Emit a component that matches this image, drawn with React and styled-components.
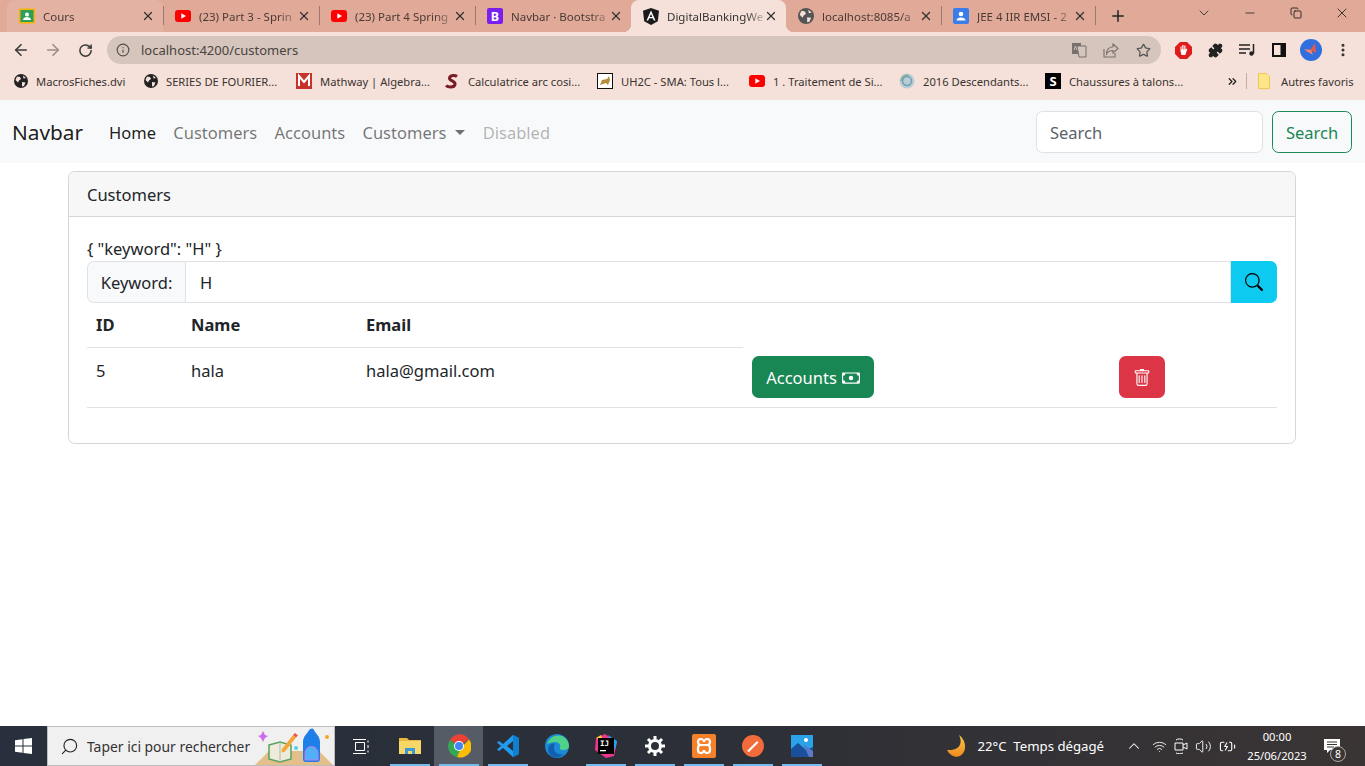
import React from "react";
import styled, { createGlobalStyle } from "styled-components";
import { BsSearch, BsCash, BsTrash } from "react-icons/bs";
import { ArrowLeft, ArrowRight, RotateCw, Info, Star, Plus, X, ChevronDown, Minus, Copy, Search, Puzzle, ChevronUp, Volume2, Wifi, BatteryCharging, EllipsisVertical, ChevronsRight } from "lucide-react";

const Global = createGlobalStyle`
  html, body { margin: 0; padding: 0; background: #fff; }
  body { font-family: "Noto Sans", "Open Sans", sans-serif; color: #212529; overflow: hidden; }
  * { box-sizing: border-box; }
`;

const Shell = styled.div`display:flex;flex-direction:column;height:766px;width:1365px;`;

/* ---------- browser chrome ---------- */
const TabStrip = styled.div`display:flex;align-items:stretch;height:32px;background:#e0a998;padding-left:7px;`;
const Tab = styled.div`
  position:relative;width:${p=>p.$w||156}px;display:flex;align-items:center;gap:8px;flex:none;
  padding:0 8px 0 12px;font-size:11.5px;color:${p=>p.$active?"#333":"#4a3a36"};
  border-radius:${p=>p.$active||p.$hover?"8px 8px 0 0":"0"};
  background:${p=>p.$active?"#f5e1da":p.$hover?"#e4b2a2":"transparent"};
  ${p=>p.$sep?`&::after{content:"";position:absolute;right:-1px;top:6px;height:19px;width:1px;background:#9a7a70;}`:""}
  ${p=>p.$active?`
    &::before,&::after{content:"";position:absolute;bottom:0;width:8px;height:8px;}
    &::before{left:-8px;background:radial-gradient(circle at 0 0,transparent 8px,#f5e1da 8.5px);}
    &::after{right:-8px;background:radial-gradient(circle at 100% 0,transparent 8px,#f5e1da 8.5px);}
  `:""}
`;
const TabTitle = styled.span`
  flex:1;min-width:0;margin-right:-7px;overflow:hidden;white-space:nowrap;
  -webkit-mask-image:linear-gradient(90deg,#000 82%,rgba(0,0,0,.25));mask-image:linear-gradient(90deg,#000 82%,rgba(0,0,0,.25));
`;
const NewTab = styled.div`width:46px;display:flex;align-items:center;justify-content:center;color:#222;`;
const WinControls = styled.div`margin-left:auto;display:flex;align-items:flex-start;`;
const WinBtn = styled.div`width:46px;height:26px;display:flex;align-items:center;justify-content:center;color:#222;`;

const Toolbar = styled.div`height:36px;background:#f5e1da;display:flex;align-items:flex-start;padding:4px 5px 0 5px;`;
const ToolBtn = styled.div`width:32px;height:28px;display:flex;align-items:center;justify-content:center;color:${p=>p.$muted?"#9a8d88":"#3a3a3a"};flex:none;`;
const Omnibox = styled.div`
  width:1054px;height:28px;margin:0 6px;border-radius:14px;background:#d5c5bc;flex:none;
  display:flex;align-items:center;padding:0 2px 0 9px;font-size:13px;color:#4a4340;
`;
const Url = styled.span`flex:1;margin-left:11px;`;

const Bookmarks = styled.div`
  height:32px;background:#f5e1da;display:flex;align-items:center;padding:0 10px 6px 14px;
  font-size:11.2px;color:#3a3230;white-space:nowrap;
`;
const Bookmark = styled.div`width:${p=>p.$w}px;display:flex;align-items:center;gap:${p=>p.$gap||8}px;flex:none;`;
const BmSep = styled.div`width:1px;height:16px;background:#c4aca4;margin:0 11px 0 7px;`;

/* ---------- navbar ---------- */
const Navbar = styled.nav`height:63px;background:#f8f9fa;display:flex;align-items:center;padding:0 13px 0 12px;`;
const Brand = styled.a`font-size:20.8px;color:rgba(0,0,0,.9);margin-right:26px;`;
const NavList = styled.div`display:flex;gap:17.3px;align-items:center;padding-top:1px;`;
const NavLink = styled.a`
  font-size:16.5px;
  color:${p=>p.$active?"rgba(0,0,0,.9)":p.$disabled?"rgba(0,0,0,.3)":"rgba(0,0,0,.55)"};
  display:inline-flex;align-items:center;
`;
const Caret = styled.span`
  display:inline-block;margin-left:9px;border-top:5px solid rgba(0,0,0,.55);
  border-left:5px solid transparent;border-right:5px solid transparent;
`;
const SearchForm = styled.form`margin-left:auto;display:flex;gap:9px;`;
const SearchInput = styled.div`
  width:227px;height:42px;border:1px solid #dee2e6;border-radius:6.6px;background:#fff;
  display:flex;align-items:center;padding:1px 13px 0;font-size:16.5px;color:#5c636a;
`;
const OutlineBtn = styled.button`
  width:80px;height:42px;border:1px solid #198754;border-radius:6.6px;background:transparent;
  font:inherit;font-size:16.5px;color:#198754;padding:1px 0 0;
`;

/* ---------- page ---------- */
const Page = styled.main`flex:1;padding:8px 1px 0 0;`;
const Card = styled.section`width:1228px;height:273px;margin:0 auto;border:1px solid #d4d6d9;border-radius:6.6px;overflow:hidden;`;
const CardHeader = styled.header`
  height:45px;background:#f7f7f7;border-bottom:1px solid #d4d6d9;display:flex;align-items:center;padding:0 18px;font-size:16.5px;
`;
const CardBody = styled.div`padding:18px 18px 0;font-size:16.5px;`;
const Json = styled.div`height:26px;padding-top:1px;line-height:26px;white-space:pre;`;
const InputGroup = styled.div`display:flex;height:42px;`;
const Addon = styled.div`
  width:99px;background:#f8f9fa;border:1px solid #dee2e6;border-radius:6.6px 0 0 6.6px;
  display:flex;align-items:center;justify-content:center;
`;
const KeywordInput = styled.div`
  flex:1;border:1px solid #dee2e6;border-left:0;display:flex;align-items:center;padding-left:14px;
`;
const InfoBtn = styled.button`
  width:46px;background:#0dcaf0;border:0;border-radius:0 6.6px 6.6px 0;color:#000;padding:0;
  display:flex;align-items:center;justify-content:center;
`;
const Table = styled.table`width:100%;border-collapse:collapse;table-layout:fixed;`;
const Th = styled.th`
  height:44px;text-align:left;padding:0 9px;font-weight:700;font-size:16.5px;border-bottom:1px solid #dee2e6;
`;
const Td = styled.td`
  height:60px;padding:10px 9px 9px;vertical-align:top;line-height:26px;
  &:nth-child(n+4){padding:9px 9px 8px;}
`;
const Row = styled.tr`border-bottom:1px solid #dee2e6;`;
const Btn = styled.button`
  height:42px;border:0;border-radius:6.6px;color:#fff;font:inherit;font-size:16.5px;
  background:${p=>p.$bg};width:${p=>p.$w}px;display:flex;align-items:center;justify-content:center;gap:5px;padding:1px 0 0;
`;

/* ---------- taskbar ---------- */
const Taskbar = styled.footer`
  height:40px;display:flex;align-items:stretch;color:#fff;
  background:linear-gradient(90deg,#27303c 0%,#2b2f38 45%,#3a3434 100%);
`;
const StartBtn = styled.div`width:47px;display:flex;align-items:center;justify-content:center;`;
const SearchBox = styled.div`
  width:288px;margin-right:1px;background:#f0f0f0;border:1px solid #bdbdbd;color:#333;font-size:13.9px;
  display:flex;align-items:center;padding-left:12px;gap:8px;position:relative;overflow:hidden;
`;
const Tile = styled.div`
  width:49px;position:relative;display:flex;align-items:center;justify-content:center;
  background:${p=>p.$active?"#555c66":"transparent"};
  ${p=>p.$open?`&::after{content:"";position:absolute;left:5px;right:4px;bottom:0;height:2px;background:#76b9ed;}`:""}
`;
const Tray = styled.div`margin-left:auto;display:flex;align-items:stretch;font-size:13.2px;`;
const Weather = styled.div`display:flex;align-items:center;gap:9px;margin-right:21px;white-space:pre;`;
const TrayIcons = styled.div`display:flex;align-items:center;gap:7px;margin-right:6px;`;
const Clock = styled.div`width:70px;text-align:center;font-size:11.2px;line-height:19px;align-self:center;`;
const Notif = styled.div`width:53px;padding-right:13px;position:relative;display:flex;align-items:center;justify-content:center;`;
const NotifBadge = styled.span`
  position:absolute;left:18px;top:20px;width:16px;height:16px;border-radius:50%;border:1px solid #aaa;
  background:#3a3634;font-size:10.5px;line-height:14px;text-align:center;
`;

/* ---------- drawn logos ---------- */
const Yt = () => <svg width="16" height="12" viewBox="0 0 16 12"><rect width="16" height="12" rx="3" fill="#f00"/><path d="M6.3 3.2v5.6L11 6z" fill="#fff"/></svg>;
const Globe = ({c="#222",s=14}) => <svg width={s} height={s} viewBox="0 0 14 14"><circle cx="7" cy="7" r="7" fill={c}/><path d="M3 2.5l3 .5 1 2-2 1.5-1 2L1.5 6zM8 8l3.5 .5L10 12l-2 .5zM9 1.5l3 2.5-2.5.5z" fill="#f5e1da"/></svg>;
const Classroom = () => <svg width="16" height="16" viewBox="0 0 16 16"><rect width="16" height="15" y=".5" rx="1" fill="#f4b400"/><rect x="1.5" y="2" width="13" height="12" fill="#2f9e58"/><circle cx="8" cy="6.5" r="2" fill="#fff"/><path d="M4 12c0-2 2-3 4-3s4 1 4 3z" fill="#fff"/></svg>;
const BootstrapLogo = () => <svg width="16" height="16" viewBox="0 0 16 16"><rect width="16" height="16" rx="2" fill="#7a1ff0"/><text x="8" y="12.5" textAnchor="middle" fontSize="12.5" fontWeight="700" fill="#fff" fontFamily="Noto Sans">B</text></svg>;
const Angular = () => <svg width="16" height="17" viewBox="0 0 16 17"><path d="M8 0l8 2.8-1.2 10.4L8 17l-6.800-3.800L0 2.800z" fill="#1a1a1a"/><path d="M8 2.500L3.500 12.500h1.700l.9-2.300h3.800l.9 2.300h1.700zM8 6l1.300 3h-2.600z" fill="#fff"/></svg>;
const Person = () => <svg width="16" height="16" viewBox="0 0 16 16"><rect width="16" height="16" rx="2" fill="#3b7de8"/><circle cx="8" cy="6" r="2.300" fill="#fff"/><path d="M3.500 12.500c0-2 2-3 4.500-3s4.500 1 4.500 3z" fill="#fff"/></svg>;
const Mathway = () => <svg width="16" height="16" viewBox="0 0 16 16"><rect width="16" height="16" fill="#c8322d"/><path d="M3 13V3l5 6 5-6v10" fill="none" stroke="#fff" strokeWidth="2"/></svg>;
const Serif = () => <svg width="16" height="16" viewBox="0 0 16 16"><path d="M13 3.500C11 2 6 2 5.500 5S12 8 11 11.500 4 14.500 2 12.500" fill="none" stroke="#7a1c26" strokeWidth="3"/></svg>;
const Tomcat = () => <svg width="16" height="16" viewBox="0 0 16 16"><rect x=".5" y=".5" width="15" height="15" fill="#fff" stroke="#111"/><path d="M3 12l2-5 5-1 2-3 1 4-2 5-2-2-3 1z" fill="#b58b3d"/></svg>;
const Descend = () => <svg width="16" height="16" viewBox="0 0 16 16"><circle cx="8" cy="8" r="7.500" fill="#b9cdd2"/><circle cx="8" cy="8" r="4.500" fill="none" stroke="#6f9fb5" strokeWidth="1.500"/><path d="M2 8a6 6 0 0 1 8-5.500" fill="none" stroke="#7fae8c" strokeWidth="1.200"/></svg>;
const SLogo = () => <svg width="16" height="16" viewBox="0 0 16 16"><rect width="16" height="16" fill="#000"/><text x="8" y="12.800" textAnchor="middle" fontSize="13" fontWeight="700" fill="#fff" fontFamily="Noto Sans">S</text></svg>;
const FolderNote = () => <svg width="12" height="16" viewBox="0 0 12 16"><path d="M.5 .5h8l3 3v12H.5z" fill="#fde58a" stroke="#ecc94b"/></svg>;
const TranslateIc = () => <svg width="16" height="16" viewBox="0 0 16 16"><rect x="1" y="1" width="9" height="11" fill="#77706c"/><path d="M6 4h9v11H8z" fill="#d5c5bc" stroke="#77706c"/><path d="M3 8l1.500-4L6 8M9 8h4M11 8c0 2-1 3-2 4M10 10l3 2" fill="none" stroke="#d5c5bc" strokeWidth=".9"/></svg>;
const ShareIc = () => <svg width="16" height="15" viewBox="0 0 16 15" fill="none" stroke="#77706c" strokeWidth="1.100"><path d="M1 6v8h11V10"/><path d="M10 1l5 4.500L10 10V7.500C7 7.500 5 8.500 3.500 11c0-4 2.500-7 6.500-7.300z"/></svg>;
const Adblock = () => <svg width="17" height="17" viewBox="0 0 17 17"><path d="M5 0h7l5 5v7l-5 5H5l-5-5V5z" fill="#e01b1b"/><path d="M5.500 4.500h1v3h.8V3h1.200v4.500h.8V3.500h1.200V8l.8-1.500 1 .5-2 6H6.500L5.500 9z" fill="#fff"/></svg>;
const MediaIc = () => <svg width="16" height="14" viewBox="0 0 16 14"><path d="M0 2h11M0 6h11M0 10h7" stroke="#222" strokeWidth="1.500"/><path d="M14.500 1v9.500" stroke="#222" strokeWidth="1.500"/><circle cx="12.500" cy="10.500" r="2.200" fill="#222"/></svg>;
const SideIc = () => <svg width="14" height="14" viewBox="0 0 14 14"><path d="M0 0h14v14H0z" fill="#111"/><path d="M2 2h6.500v10H2z" fill="#f5e1da"/></svg>;
const Avatar = () => <svg width="22" height="22" viewBox="0 0 22 22"><circle cx="11" cy="11" r="11" fill="#2f6fe0"/><path d="M15 4l1 10-4-2-7 1 6-3z" fill="#e8584a"/><path d="M4 10l7 1 2 5-5-3z" fill="#f08a70"/></svg>;
const WindowsLogo = () => <svg width="17" height="16" viewBox="0 0 17 16"><path d="M0 2.300L7.500 1.200v6.300H0zM8.500 1L17 0v7.500H8.500zM0 8.500h7.500v6.300L0 13.700zM8.500 8.500H17V16L8.500 15z" fill="#fff"/></svg>;
const Doodle = () => <svg width="80" height="38" viewBox="0 0 80 38" style={{position:"absolute",right:0,top:0}}>
  <path d="M1 38l14-14h50l14 14z" fill="#e3bf8b"/>
  <path d="M15 18l11-3 11 3v14l-11 3-11-3z" fill="#ecebdc" stroke="#58a35c" strokeWidth="1.500"/>
  <path d="M26 15v20" stroke="#b8b8a8"/>
  <path d="M28 22l11-14 3 2.500-11 14-3.500 1z" fill="#f3a73b"/><path d="M39 8l2-2 3 2.500-2 2z" fill="#e8584a"/>
  <path d="M7 8l2-4 2 4 3 1-3 2-2 4-2-4-3-2z" fill="#d16af0"/>
  <path d="M49 32V15c0-6 5-9 6-12 2-2 4-2 5 0 1 3 6 6 6 12v17a3 3 0 0 1-3 3H52a3 3 0 0 1-3-3z" fill="#1f7fe8"/>
  <path d="M51 33v-6c0-10 13-10 13 0v6z" fill="#4fb0f5" stroke="#c37cf0"/>
  <circle cx="73" cy="10" r="2" fill="#f5a623"/><circle cx="42" cy="21" r="2" fill="#57d0e0"/>
</svg>;
const TaskView = () => <svg width="16" height="15" viewBox="0 0 16 15" fill="none" stroke="#fff"><path d="M0 .5h13M0 14.500h13M2.500 3.500h9v8h-9z"/><path d="M15 1.500v2M15 6v3M15 11.500v2"/></svg>;
const FolderIc = () => <svg width="22" height="18" viewBox="0 0 22 18"><path d="M0 1h8l2 2h12v4H0z" fill="#e8b93c"/><path d="M0 4h22v13H0z" fill="#f6d768"/><path d="M6 11h10v6h-3v-3H9v3H6z" fill="#3a98d8"/></svg>;
const ChromeIc = () => <svg width="24" height="24" viewBox="0 0 24 24"><path d="M12 12L3 6a11 11 0 0 1 19-.5z" fill="#ea4335"/><path d="M3 6a11 11 0 0 0 7 17l4-8z" fill="#34a853"/><path d="M22 5.500A11 11 0 0 1 10 23l4-9z" fill="#fbbc05"/><circle cx="12" cy="12" r="5" fill="#fff"/><circle cx="12" cy="12" r="4" fill="#4285f4"/></svg>;
const VsCode = () => <svg width="24" height="24" viewBox="0 0 24 24"><path d="M17 1l6 3v16l-6 3L7 14l-4 3-2-1.500L5 12 1 8.500 3 7l4 3z" fill="#1f9cf0"/><path d="M17 7l-6 5 6 5z" fill="#2b2f38"/><path d="M17 1l6 3v16l-6 3z" fill="#0f7fd0"/></svg>;
const EdgeIc = () => <svg width="24" height="24" viewBox="0 0 24 24"><circle cx="12" cy="12" r="12" fill="#1c8ad6"/><path d="M2 10C4 3 11 0 17 2c4 1.500 7 6 7 10 0 3-3 4-6 4-2 0-4-1-3-3 1-2-1-5-5-5-3 0-6 1-8 2z" fill="#4fd18a"/><path d="M9 14c0 4 4 7 9 6-2 3-6 4-10 3C4 21 2 16 4 12c1-2 4-3 6-2-1 1-1 3-1 4z" fill="#135fb0"/></svg>;
const IntelliJ = () => <svg width="24" height="24" viewBox="0 0 24 24"><path d="M2 4l9-4 12 8-3 14-8 2L1 16z" fill="#f0358f"/><path d="M14 1l9 6-2 9z" fill="#18a7f0"/><path d="M2 4l5-3 2 6z" fill="#f5d22a"/><rect x="4" y="4" width="16" height="16" fill="#000"/><text x="6" y="12" fontSize="7.500" fontWeight="700" fill="#fff" fontFamily="DejaVu Sans Mono">IJ</text><rect x="6" y="16" width="6" height="1.300" fill="#fff"/></svg>;
const Gear = () => <svg width="20" height="20" viewBox="0 0 20 20"><circle cx="10" cy="10" r="5.500" fill="none" stroke="#fff" strokeWidth="3"/><path d="M10 0v4M10 16v4M0 10h4M16 10h4M3 3l3 3M14 14l3 3M3 17l3-3M14 6l3-3" stroke="#fff" strokeWidth="3"/></svg>;
const Xampp = () => <svg width="24" height="24" viewBox="0 0 24 24"><rect width="24" height="24" rx="2" fill="#f5812a"/><path d="M9 5a3 3 0 0 0-3 3v0a3 3 0 0 0 3 3h6a3 3 0 0 0 3-3v0a3 3 0 0 0-3-3c-2 0-3 2-3 3 0-1-1-3-3-3zM9 11a3 3 0 0 0-3 3v2a3 3 0 0 0 3 3c2 0 3-2 3-3 0 1 1 3 3 3a3 3 0 0 0 3-3v-2a3 3 0 0 0-3-3" fill="none" stroke="#fff" strokeWidth="2.200"/></svg>;
const Postman = () => <svg width="22" height="22" viewBox="0 0 22 22"><circle cx="11" cy="11" r="11" fill="#f26b3a"/><path d="M5 16L15 6l1.500 1.500L7 17z" fill="#fff"/></svg>;
const Photos = () => <svg width="22" height="22" viewBox="0 0 22 22"><rect width="22" height="22" fill="#2aa3e8"/><circle cx="15" cy="5" r="2" fill="#fff"/><path d="M0 14l7-6 8 7 7-3v10H0z" fill="#1a4f9c"/><path d="M12 9l10 7v6h-4z" fill="#5a79c9"/></svg>;
const Moon = () => <svg width="23" height="24" viewBox="2 0 21 24"><defs><linearGradient id="mg" x1="0" y1="0" x2="0" y2="1"><stop offset="0" stopColor="#f7c948"/><stop offset="1" stopColor="#f08a1d"/></linearGradient></defs><path d="M15 1c4 8 1 16-12 15 3 6 9 8 13 6 6-3 8-14-1-21z" fill="url(#mg)"/></svg>;
const MeetIc = () => <svg width="14" height="16" viewBox="0 0 14 16" fill="none" stroke="#fff"><path d="M1 5h8v7H1zM9 7l4-2v6l-4-2M2 2c2-1.500 5-1.500 7 0M2 15c2 1 5 1 7 0"/></svg>;
const NotifBubble = () => <svg width="16" height="15" viewBox="0 0 16 15"><path d="M0 0h16v11H6l-3 3v-3H0z" fill="#fff"/><path d="M3 3h10M3 5.500h10M3 8h7" stroke="#3a3634"/></svg>;

const tabs = [
  { t:"Cours", i:<Classroom/>, hover:true, sep:true },
  { t:"(23) Part 3 - Sprin", i:<Yt/>, sep:true },
  { t:"(23) Part 4 Spring", i:<Yt/>, sep:true },
  { t:"Navbar · Bootstra", i:<BootstrapLogo/> },
  { t:"DigitalBankingWe", i:<Angular/>, active:true, w:155 },
  { t:"localhost:8085/a", i:<Globe c="#555" s={16}/>, sep:true, w:155 },
  { t:"JEE 4 IIR EMSI - 2", i:<Person/>, sep:true, w:154 },
];
const marks = [
  ["MacrosFiches.dvi",<Globe/>,130],["SERIES DE FOURIER...",<Globe/>,152],["Mathway | Algebra...",<Mathway/>,148],
  ["Calculatrice arc cosi...",<Serif/>,153],["UH2C - SMA: Tous l...",<Tomcat/>,152],["1 . Traitement de Si...",<Yt/>,150],
  ["2016 Descendants...",<Descend/>,146],["Chaussures à talons...",<SLogo/>,181],
];
const tiles = [
  [<TaskView/>],[<FolderIc/>,1],[<ChromeIc/>,1,1],[<VsCode/>,1],[<EdgeIc/>],[<IntelliJ/>,1],[<Gear/>,1],[<Xampp/>,1],[<Postman/>,1],[<Photos/>,1],
];

export default function App() {
  return (
    <Shell>
      <Global/>
      <TabStrip>
        {tabs.map(t=>(
          <Tab key={t.t} $active={t.active} $hover={t.hover} $sep={t.sep} $w={t.w}>
            {t.i}<TabTitle>{t.t}</TabTitle><X size={14} strokeWidth={2.2} color="#333"/>
          </Tab>
        ))}
        <NewTab><Plus size={18} strokeWidth={2}/></NewTab>
        <WinControls>
          <WinBtn><ChevronDown size={16} strokeWidth={1.2}/></WinBtn>
          <WinBtn><Minus size={14} strokeWidth={1.4}/></WinBtn>
          <WinBtn><Copy size={12} strokeWidth={1.8}/></WinBtn>
          <WinBtn><X size={16} strokeWidth={1.3}/></WinBtn>
        </WinControls>
      </TabStrip>
      <Toolbar>
        <ToolBtn><ArrowLeft size={18} strokeWidth={2.2}/></ToolBtn>
        <ToolBtn $muted><ArrowRight size={18} strokeWidth={2.2}/></ToolBtn>
        <ToolBtn><RotateCw size={15} strokeWidth={2.4}/></ToolBtn>
        <Omnibox>
          <Info size={14} color="#55504c"/><Url>localhost:4200/customers</Url>
          <ToolBtn><TranslateIc/></ToolBtn>
          <ToolBtn><ShareIc/></ToolBtn>
          <ToolBtn><Star size={15} color="#555"/></ToolBtn>
        </Omnibox>
        <ToolBtn><Adblock/></ToolBtn>
        <ToolBtn><Puzzle size={15} fill="#222" color="#222"/></ToolBtn>
        <ToolBtn><MediaIc/></ToolBtn>
        <ToolBtn><SideIc/></ToolBtn>
        <ToolBtn><Avatar/></ToolBtn>
        <ToolBtn><EllipsisVertical size={16} strokeWidth={2.6} color="#333"/></ToolBtn>
      </Toolbar>
      <Bookmarks>
        {marks.map(([t,i,w])=><Bookmark key={t} $w={w}>{i}<span>{t}</span></Bookmark>)}
        <ChevronsRight size={13} strokeWidth={2.4} color="#222"/>
        <BmSep/>
        <Bookmark $w={96} $gap={11}><FolderNote/><span>Autres favoris</span></Bookmark>
      </Bookmarks>
      <Navbar>
        <Brand>Navbar</Brand>
        <NavList>
          <NavLink $active>Home</NavLink>
          <NavLink>Customers</NavLink>
          <NavLink>Accounts</NavLink>
          <NavLink>Customers<Caret/></NavLink>
          <NavLink $disabled>Disabled</NavLink>
        </NavList>
        <SearchForm>
          <SearchInput>Search</SearchInput>
          <OutlineBtn type="button">Search</OutlineBtn>
        </SearchForm>
      </Navbar>
      <Page>
        <Card>
          <CardHeader>Customers</CardHeader>
          <CardBody>
            <Json>{'{ "keyword": "H" }'}</Json>
            <InputGroup>
              <Addon>Keyword:</Addon>
              <KeywordInput>H</KeywordInput>
              <InfoBtn type="button"><BsSearch size={18}/></InfoBtn>
            </InputGroup>
            <Table>
              <colgroup><col width="95"/><col width="175"/><col width="386"/><col width="367"/><col/></colgroup>
              <thead><tr><Th>ID</Th><Th>Name</Th><Th>Email</Th></tr></thead>
              <tbody>
                <Row>
                  <Td>5</Td><Td>hala</Td><Td>hala@gmail.com</Td>
                  <Td><Btn $bg="#198754" $w={122}>Accounts <BsCash size={18}/></Btn></Td>
                  <Td><Btn $bg="#dc3545" $w={46}><BsTrash size={18}/></Btn></Td>
                </Row>
              </tbody>
            </Table>
          </CardBody>
        </Card>
      </Page>
      <Taskbar>
        <StartBtn><WindowsLogo/></StartBtn>
        <SearchBox><Search size={19} strokeWidth={1.4} color="#222" style={{transform:"scaleX(-1)"}}/>Taper ici pour rechercher<Doodle/></SearchBox>
        {tiles.map(([ic,open,active],i)=><Tile key={i} $open={open} $active={active}>{ic}</Tile>)}
        <Tray>
          <Weather><Moon/>22°C  Temps dégagé</Weather>
          <TrayIcons>
            <ChevronUp size={18} strokeWidth={1.4} style={{marginRight:2}}/>
            <Wifi size={15} strokeWidth={1.4}/>
            <MeetIc/>
            <Volume2 size={17} strokeWidth={1.3}/>
            <BatteryCharging size={17} strokeWidth={1.6}/>
          </TrayIcons>
          <Clock>00:00<br/>25/06/2023</Clock>
          <Notif><NotifBubble/><NotifBadge>8</NotifBadge></Notif>
        </Tray>
      </Taskbar>
    </Shell>
  );
}
